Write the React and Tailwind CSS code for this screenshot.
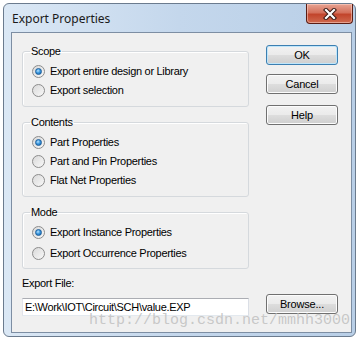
import React from 'react';

const font = { fontFamily: '"Liberation Sans", Arial, sans-serif' };

const Radio = ({ checked, label, h = 'h-[19px]' }) => (
  <div className={`flex items-center ${h}`}>
    <div className="w-[13px] h-[13px] rounded-full border border-[#8c8c8c] bg-[linear-gradient(135deg,#d9d9d9,#f8f8f8)] flex items-center justify-center shrink-0">
      {checked && (
        <div className="w-[7px] h-[7px] rounded-full border border-[#1c5f9c] bg-[radial-gradient(circle_at_40%_35%,#b8e3ff_0%,#3d9ae0_45%,#0f5aa3_100%)]" />
      )}
    </div>
    <span className="ml-[5px] text-[11px] tracking-[-0.3px] text-black leading-[13px]">{label}</span>
  </div>
);

const Group = ({ title, className = '', children }) => (
  <fieldset className={`border border-[#d5d9dd] rounded-[3px] pl-[9px] shadow-[inset_1px_1px_0_#fff] ${className}`}>
    <legend className="ml-[-2px] px-[1px] text-[11px] tracking-[-0.3px] leading-[14px] text-black">{title}</legend>
    {children}
  </fieldset>
);

const Button = ({ children, focused, className = '' }) => (
  <button
    className={`w-[72px] h-[20px] rounded-[3px] border text-[11px] tracking-[-0.2px] text-black leading-none flex items-center justify-center bg-[linear-gradient(#f2f2f2_0%,#ebebeb_48%,#dddddd_52%,#cfcfcf_100%)] ${
      focused
        ? 'border-[#3c7fb1] shadow-[inset_0_0_0_1px_#bfe6fb]'
        : 'border-[#707070] shadow-[inset_0_0_0_1px_#fcfcfc]'
    } ${className}`}
  >
    {children}
  </button>
);

export default function App() {
  return (
    <div className="w-[364px] h-[339px] bg-white relative overflow-hidden" style={font}>
      {/* window frame */}
      <div className="ml-[3px] mt-[3px] w-[353px] h-[334px] rounded-[6px] border border-[#6b7b8e] bg-gradient-to-r from-[#dbe8f5] via-[#c4d7ec] to-[#b9cfe7] flex flex-col">
        {/* title bar */}
        <div className="h-[28px] flex justify-between pl-[8px]">
          <div
            className="pt-[7px] text-[12px] leading-[16px] text-[#1a1a1a]"
            style={{ fontFamily: '"Noto Sans", "Open Sans", sans-serif' }}
          >
            Export Properties
          </div>
          <div className="mr-[2px] w-[47px] h-[20px] rounded-b-[4px] border border-t-0 border-[#5a1d14] bg-[linear-gradient(#e8a493_0%,#d4715c_45%,#c2452c_55%,#cf6a4f_100%)] shadow-[inset_0_0_0_1px_rgba(255,220,210,0.5)] flex items-center justify-center">
            <svg width="14" height="12" viewBox="0 0 14 12">
              <path d="M3 2 L11 10 M11 2 L3 10" stroke="#3a1a14" strokeWidth="4.2" strokeLinecap="square" />
              <path d="M3 2 L11 10 M11 2 L3 10" stroke="#ffffff" strokeWidth="2.2" strokeLinecap="square" />
            </svg>
          </div>
        </div>

        {/* client area */}
        <div className="ml-[7px] w-[341px] h-[301px] border border-[#7d8ea3] bg-[#f0f0f0] flex flex-col pl-[10px]">
          <div className="flex">
            <div className="w-[227px] flex flex-col mt-[11px]">
              <Group title="Scope" className="pt-[4px] pb-[6px]">
                <Radio checked label="Export entire design or Library" />
                <Radio label="Export selection" />
              </Group>
              <Group title="Contents" className="mt-[8px] pt-[4px] pb-[6px]">
                <Radio checked label="Part Properties" />
                <Radio label="Part and Pin Properties" />
                <Radio label="Flat Net Properties" />
              </Group>
              <Group title="Mode" className="mt-[8px] pt-[3px] pb-[4px]">
                <Radio checked label="Export Instance Properties" h="h-[21px]" />
                <Radio label="Export Occurrence Properties" h="h-[21px]" />
              </Group>
            </div>
            <div className="ml-[17px] mt-[12px] flex flex-col">
              <Button focused>OK</Button>
              <Button className="mt-[9px]">Cancel</Button>
              <Button className="mt-[11px]">Help</Button>
            </div>
          </div>

          <div className="mt-[8px] text-[11px] tracking-[-0.3px] leading-[13px] text-black">Export File:</div>
          <div className="flex items-start mt-[4px]">
            <div className="mt-[4px] w-[227px] h-[18px] bg-white border border-[#abadb3] border-r-[#dbdfe6] border-b-[#e3e9ef] border-l-[#e2e3ea] pl-[2px] flex items-center text-[11px] tracking-[-0.3px] text-black">
              E:\Work\IOT\Circuit\SCH\value.EXP
            </div>
            <Button className="ml-[17px]">Browse...</Button>
          </div>
        </div>
      </div>

      {/* watermark */}
      <div
        className="absolute left-[89px] top-[312px] text-[15px] leading-[17px] text-[#bdbdbd]/80 pointer-events-none whitespace-nowrap"
        style={{ fontFamily: '"Liberation Mono", monospace' }}
      >
        http://blog.csdn.net/mmhh3000
      </div>
    </div>
  );
}
